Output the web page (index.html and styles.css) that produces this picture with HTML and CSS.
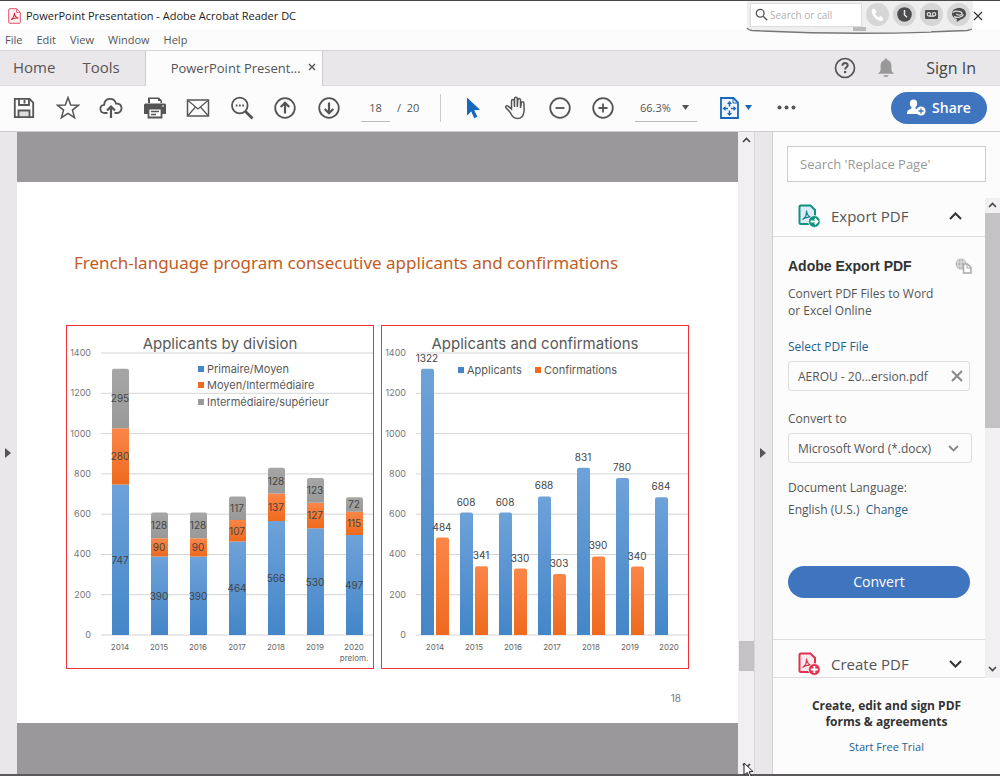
FILE: index.html
```html
<!DOCTYPE html>
<html lang="en">
<head>
<meta charset="utf-8">
<title>PowerPoint Presentation - Adobe Acrobat Reader DC</title>
<link rel="stylesheet" href="styles.css">
</head>
<body>
<div class="app">
  <header class="titlebar">
    <svg class="title-icon" width="13" height="16" viewBox="0 0 13 16" fill="none" stroke="#e2566c"><path fill="#fdf1f2" d="M.7 2Q.7.7 2 .7h6.500L12.300 4.500V14q0 1.300-1.300 1.300H2Q.7 15.300.7 14z"/><path d="M8.500.7v3.800h3.800" stroke-width=".8"/><path stroke="#d5283f" stroke-width="1.100" d="M3 11.800c2-1.500 3.300-4 3.400-6.800 0 2.800 1.600 4.700 4 5.200C7.500 9.500 5.300 10 3 11.800z"/></svg>
    <span>PowerPoint Presentation - Adobe Acrobat Reader DC</span>
    <button class="close" aria-label="Close"><svg width="10" height="10" viewBox="0 0 10 10" stroke="#333" stroke-width="1.200"><path d="M1 1l8 8M9 1L1 9"/></svg></button>
  </header>

  <div class="callbar">
    <label class="callsearch">
      <svg width="13" height="13" viewBox="0 0 13 13" fill="none" stroke="#555" stroke-width="1.300"><circle cx="5.200" cy="5.200" r="3.900"/><path d="M8.200 8.200l4 4"/></svg>
      <input type="text" placeholder="Search or call" aria-label="Search or call">
    </label>
    <button class="round" aria-label="Call"><svg width="23" height="23" viewBox="0 0 23 23"><path fill="#fff" d="M6.200 6.300l2.300-.8 2 3.600-1.500 1.500c.8 1.800 2 3 3.700 3.800l1.600-1.400 3.200 2.200-1 2.200c-1 .8-2.600.6-4.200-.2C9 15.500 6.700 12.700 5.900 9.500c-.3-1.300-.2-2.500.3-3.200z"/></svg></button>
    <button class="round" aria-label="Recent calls"><svg width="23" height="23" viewBox="0 0 23 23"><circle cx="11.500" cy="11.500" r="7.300" fill="#4d4d4f"/><path d="M11.500 7v5l2.600 2.200" fill="none" stroke="#e8e8e8" stroke-width="1.500"/></svg></button>
    <button class="round" aria-label="Voicemail"><svg width="23" height="23" viewBox="0 0 23 23"><rect x="5" y="7" width="13" height="9" rx="1" fill="#4d4d4f"/><g fill="none" stroke="#ddd" stroke-width="1.200"><circle cx="8.900" cy="11.300" r="1.700"/><circle cx="14.100" cy="11.300" r="1.700"/><path d="M8.900 13.200h5.200"/></g></svg></button>
    <button class="round" aria-label="Messages"><svg width="23" height="23" viewBox="0 0 23 23"><path fill="#4d4d4f" d="M5 10.500C5 7.300 8 5 12 5c4.200 0 7 2.400 7 5.800 0 3.200-2.600 5.200-5.300 5.700L9.800 19v-3.300C6.800 15.400 5 13.300 5 10.500z"/><path fill="none" stroke="#dcdcdc" stroke-width="1.300" d="M5.500 9.500c3-2 9.500-1.600 9.500 1 0 2.300-5.500 2-5.300.2M7 13.600c3.500 1.800 8.500.5 9.500-2"/></svg></button>
    <svg class="call-edge" width="225" height="7" viewBox="0 0 225 7"><path fill="#efefef" d="M0 0h225v1q-2 1-5 1.500Q112 8 5 2.500 1 2 0 0z"/><path fill="none" stroke="#777" stroke-width="1.300" d="M0 0q1 2 5 2.500Q112 8 220 2.500q3-.5 5-1.500"/><rect x="106" y="-1" width="13" height="4" fill="#bbb"/></svg>
  </div>

  <nav class="menubar">
    <button>File</button><button>Edit</button><button>View</button><button>Window</button><button>Help</button>
  </nav>

  <div class="tabs">
    <button class="home">Home</button>
    <button class="tools">Tools</button>
    <div class="doc-tab"><span>PowerPoint Present...</span>
      <button aria-label="Close tab"><svg width="8" height="8" viewBox="0 0 8 8" stroke="#555" stroke-width="1.400"><path d="M1 1l6 6M7 1L1 7"/></svg></button></div>
    <div class="account">
      <button aria-label="Help"><svg width="22" height="22" viewBox="0 0 22 22" fill="none" stroke="#555" stroke-width="1.700"><circle cx="11" cy="11" r="9.500"/><path stroke-width="2" d="M8.500 8.700c0-3.500 5.200-3.300 5.200-.4 0 2-2.600 2-2.600 4.200"/><path stroke-width="2.200" d="M11.100 14v2.200"/></svg></button>
      <button aria-label="Notifications"><svg width="18" height="20" viewBox="0 0 18 20" fill="#999"><path d="M9 .5c1 0 1.400.7 1.400 1.600 2.500.7 4 2.800 4 5.400v4.300c0 1.500 1.100 2.700 2.800 4H.8c1.700-1.300 2.800-2.500 2.800-4V7.500c0-2.600 1.500-4.700 4-5.400C7.600 1.200 8 .5 9 .5z"/><path d="M6.500 17.200h5c-.5 2.500-4.500 2.500-5 0z"/></svg></button>
      <button class="signin">Sign In</button>
    </div>
  </div>

  <div class="toolbar">
    <div class="tools-left">
      <button aria-label="Save"><svg viewBox="0 0 24 24"><path fill="#ddd" d="M7 15.500h10V21H7z" stroke="none"/><path d="M2.800 2.800h14.700l3.700 3.700v14.700H2.800z"/><path d="M7 3v6h10V3M12.500 4v3.500M6.500 21v-6.500h11V21"/></svg></button>
      <button aria-label="Star"><svg viewBox="0 0 24 24"><path stroke-width="1.500" d="M12 1.500l2.700 7.400 7.900.3-6.200 4.900 2.200 7.600-6.600-4.400-6.600 4.400 2.200-7.600-6.200-4.900 7.900-.3z"/></svg></button>
      <button aria-label="Upload"><svg viewBox="0 0 24 24"><path d="M8.500 17H6c-6 0-6-8-.8-8.200C5.500 1.500 15 1 17 7.500c7.500-.5 7 9.500 1 9.500h-2.500"/><path stroke-width="2.200" d="M12 22V11M8 14.500l4-4 4 4"/></svg></button>
      <button aria-label="Print"><svg viewBox="0 0 24 24"><path fill="#555" d="M1 9q0-1.500 1.500-1.500h19Q23 7.500 23 9v9h-4v-4.500H5V18H1z" stroke="none"/><path fill="#555" d="M5 1.500h11l3 3V7H5z" stroke="none"/><path fill="#fff" stroke="none" d="M7 3h8v2h2.500v2H7z"/><path fill="#fff" d="M5.500 12.500h13v9h-13z"/><path d="M8 15.500h8M8 18.500h5" stroke-width="1.300"/><path stroke="#fff" stroke-width="1" d="M19 10h2"/></svg></button>
      <button aria-label="Email"><svg viewBox="0 0 24 24"><path stroke-width="1.500" d="M1.500 4h21v16h-21z"/><path stroke-width="1.200" d="M2 4.500l10 8.500 10-8.500M2 19.500l7.500-8.500M22 19.500L14.500 11"/></svg></button>
      <button aria-label="Search"><svg viewBox="0 0 24 24"><circle cx="9.800" cy="9.500" r="7.800"/><path stroke-width="2.800" d="M15.500 15.500l7 7"/><path stroke-width="1.800" d="M5.800 9.500h1.700M9 9.500h1.700M12.200 9.500h1.700"/></svg></button>
      <button aria-label="Previous page"><svg viewBox="0 0 24 24"><circle cx="12" cy="12" r="9.800"/><path stroke-width="2.200" d="M12 17.500V7.500M7.700 11L12 6.700l4.300 4.300"/></svg></button>
      <button aria-label="Next page"><svg viewBox="0 0 24 24"><circle cx="12" cy="12" r="9.800"/><path stroke-width="2.200" d="M12 6.500v10M7.700 13l4.300 4.300 4.300-4.300"/></svg></button>
    </div>
    <div class="pager"><input type="text" value="18" aria-label="Page number"><span>/&nbsp; 20</span></div>
    <div class="tools-mid">
      <button aria-label="Select"><svg viewBox="0 0 24 24"><path fill="#1767ba" stroke="none" d="M6 1.500l13 12.200-5.800.5 3.200 6.600-3.200 1.500-2.900-6.700L6 19.500z"/></svg></button>
      <button aria-label="Pan"><svg viewBox="0 0 24 24"><path stroke-width="1.500" d="M6.300 16.500L2 11.800c-1-1.500.6-2.800 2.200-1.700l3.300 3V5c0-2 2.600-2 2.700 0l.3 6V2.800c0-2 2.800-2 2.800 0V11l.5-7.200c.2-1.900 2.700-1.800 2.700.2V12l.8-5c.4-1.800 2.700-1.500 2.600.4C19.800 10 20.500 13 20 15c-.3 4.500-2.500 7.500-6.500 7.500-4 0-5.700-2.500-7.200-6z"/></svg></button>
      <button aria-label="Zoom out"><svg viewBox="0 0 24 24"><circle cx="12" cy="12" r="9.800"/><path d="M7.500 12h9"/></svg></button>
      <button aria-label="Zoom in"><svg viewBox="0 0 24 24"><circle cx="12" cy="12" r="9.800"/><path d="M7.500 12h9M12 7.500v9"/></svg></button>
    </div>
    <label class="zoom"><select aria-label="Zoom level"><option>66.3%</option></select><svg width="7" height="5" viewBox="0 0 7 5"><path fill="#555" d="M0 0h7L3.500 5z"/></svg></label>
    <button class="fit" aria-label="Page display">
      <svg width="19" height="22" viewBox="0 0 19 22"><path fill="#eef5fd" stroke="#1767ba" stroke-width="1.800" d="M1 1h12.500L18 5.500V21H1z"/><path fill="none" stroke="#1767ba" d="M13 1v5h5"/><g fill="#1767ba"><path d="M9.500 4l2.500 3H7zM9.500 19L7 16h5zM2.500 11.500l3-2.500v5zM16.500 11.500l-3-2.500v5z"/></g><path stroke="#1767ba" stroke-width="1.500" d="M9.500 6v3.500M9.500 13.500V17M5 11.500h3M11 11.500h3"/></svg>
      <svg width="7" height="5" viewBox="0 0 7 5"><path fill="#1767ba" d="M0 0h7L3.500 5z"/></svg>
    </button>
    <button class="more" aria-label="More tools"><svg width="19" height="5" viewBox="0 0 19 5" fill="#555"><circle cx="2.500" cy="2.500" r="2"/><circle cx="9.500" cy="2.500" r="2"/><circle cx="16.500" cy="2.500" r="2"/></svg></button>
    <button class="share"><svg width="19" height="17" viewBox="0 0 19 17"><path fill="#fff" d="M6.500.5c2.400 0 3.700 1.600 3.700 3.900 0 1.700-.7 2.900-1.700 3.700v1.300c1 .4 1.800.7 2.500 1.100-.9 1.200-1 2.900-.3 4.500H0c0-3.500 1.200-4.400 4.500-5.600V8.100c-1-.8-1.700-2-1.700-3.700C2.800 2.100 4.100.5 6.500.5z"/><circle cx="14" cy="12" r="4.600" fill="#fff"/><path stroke="#3f75bf" stroke-width="1.300" d="M14 9.500v5M11.500 12h5"/></svg>Share</button>
  </div>

  <main class="main">
    <button class="rail rail-left" aria-label="Open navigation pane"><svg width="6" height="10" viewBox="0 0 6 10"><path fill="#555" d="M0 0l6 5-6 5z"/></svg></button>
    <section class="viewer">
      <article class="slide">
        <h1>French-language program consecutive applicants and confirmations</h1>
        <div class="charts">
          <svg class="chart" id="division" viewBox="0 0 306 342" role="img" aria-label="Applicants by division"></svg>
          <svg class="chart" id="confirmations" viewBox="0 0 306 342" role="img" aria-label="Applicants and confirmations"></svg>
        </div>
        <div class="page-no">18</div>
      </article>
    </section>
    <div class="scroll doc-scroll">
      <svg width="9" height="6" viewBox="0 0 9 6"><path d="M1 5l3.500-3.500L8 5"/></svg>
      <div class="thumb"></div>
      <svg class="down" width="9" height="6" viewBox="0 0 9 6"><path d="M1 1l3.500 3.500L8 1"/></svg>
      <svg class="pointer" width="11" height="16" viewBox="0 0 11 16"><path fill="#fff" stroke="#222" d="M1 1l9 8.500-4 .3 2.200 4.400-1.900.8-2-4.500L1 13z"/></svg>
    </div>
    <button class="rail rail-right" aria-label="Collapse tools pane"><svg width="6" height="10" viewBox="0 0 6 10"><path fill="#555" d="M0 0l6 5-6 5z"/></svg></button>
    <aside class="panel">
      <input class="panel-search" type="text" placeholder="Search 'Replace Page'" aria-label="Search tools">
      <div class="panel-mid">
        <div class="panel-list">
          <button class="tool-head">
            <svg width="23" height="24" viewBox="0 0 23 24"><path fill="#dcebfa" stroke="#0f927f" stroke-width="2" d="M1.500 3q0-1.500 1.500-1.500h9.500L17 6v14H3q-1.500 0-1.500-1.500z"/><path fill="none" stroke="#0f7f86" stroke-width="1.100" d="M4.500 15.500c3-1.800 4.300-5 4-9 .3 4.500 2.500 6.500 5.500 7-3.500-.8-6.500-.3-9.500 2z"/><circle cx="16.300" cy="17.500" r="5.900" fill="#0f927f" stroke="#fff" stroke-width=".8"/><path fill="none" stroke="#fff" stroke-width="1.900" d="M12.500 17.500h6.500M16.800 14.700l2.700 2.800-2.700 2.800"/></svg>
            <span>Export PDF</span>
            <svg class="chev" width="13" height="8" viewBox="0 0 13 8"><path d="M1 7l5.500-5.500L12 7"/></svg>
          </button>
          <div class="tool-body">
            <div class="body-head"><h2>Adobe Export PDF</h2>
              <svg width="17" height="16" viewBox="0 0 17 16"><circle cx="6" cy="6" r="5.500" fill="#b5b5b5"/><path fill="none" stroke="#eee" d="M1 4h10M1 8h10M6 1v10M3.500 1.500q-2 4.500 0 9M8.500 1.500q2 4.500 0 9" stroke-width=".7"/><path fill="#fff" stroke="#aaa" stroke-width="1.500" d="M8.500 6h4l3.500 3.500V15H8.500z"/><path fill="none" stroke="#aaa" d="M12 6v4h4"/></svg></div>
            <p class="intro">Convert PDF Files to Word<br>or Excel Online</p>
            <a class="select-file" href="#">Select PDF File</a>
            <div class="file"><span>AEROU - 20...ersion.pdf</span><button aria-label="Remove file"><svg width="12" height="12" viewBox="0 0 12 12" stroke="#888" stroke-width="2"><path d="M1 1l10 10M11 1L1 11"/></svg></button></div>
            <label class="convert-label" for="format">Convert to</label>
            <div class="format"><select id="format"><option>Microsoft Word (*.docx)</option></select><svg width="11" height="7" viewBox="0 0 11 7"><path fill="none" stroke="#888" stroke-width="1.800" d="M1 1l4.500 4.500L10 1"/></svg></div>
            <p class="lang">Document Language:<br>English (U.S.)&nbsp; <a href="#">Change</a></p>
            <button class="convert">Convert</button>
          </div>
          <button class="tool-head create">
            <svg width="23" height="24" viewBox="0 0 23 24"><path fill="#fbeaec" stroke="#e0304f" stroke-width="2" d="M1.500 3q0-1.500 1.500-1.500h9.500L17 6v14H3q-1.500 0-1.500-1.500z"/><path fill="none" stroke="#d5304b" stroke-width="1.100" d="M4.500 15.500c3-1.800 4.300-5 4-9 .3 4.500 2.500 6.500 5.500 7-3.500-.8-6.500-.3-9.500 2z"/><circle cx="16.300" cy="17.500" r="5.900" fill="#e0304f" stroke="#fff" stroke-width=".8"/><path fill="none" stroke="#fff" stroke-width="2" d="M12.800 17.500h7M16.300 14v7"/></svg>
            <span>Create PDF</span>
            <svg class="chev" width="13" height="8" viewBox="0 0 13 8"><path d="M1 1l5.500 5.500L12 1"/></svg>
          </button>
        </div>
        <div class="scroll panel-scroll">
          <svg width="9" height="6" viewBox="0 0 9 6"><path d="M1 5l3.500-3.500L8 5"/></svg>
          <div class="thumb"></div>
          <svg class="down" width="9" height="6" viewBox="0 0 9 6"><path d="M1 1l3.500 3.500L8 1"/></svg>
        </div>
      </div>
      <footer class="promo">
        <strong>Create, edit and sign PDF<br>forms &amp; agreements</strong>
        <a href="#">Start Free Trial</a>
      </footer>
    </aside>
  </main>
</div>
<script src="charts.js"></script>
</body>
</html>
```
FILE: styles.css
```css
* { box-sizing: border-box; }
body {
  margin: 0;
  font-family: "Open Sans", "Noto Sans", sans-serif;
  font-size: 12px;
  color: #555;
  background: #fcfcfd;
}
button, input, select { font: inherit; color: inherit; }
button { padding: 0; border: 0; background: none; }
h1, h2, p { margin: 0; font-weight: 400; }
svg { display: block; flex: none; }
a { color: #26628f; text-decoration: none; }

.app {
  position: relative;
  display: flex;
  flex-direction: column;
  min-height: 100vh;
  border-top: 1px solid #4a484b;
  border-bottom: 2px solid #5a585b;
}

.titlebar {
  display: flex;
  align-items: center;
  gap: 5px;
  height: 29px;
  padding: 0 17px 0 8px;
  background: #fff;
  color: #222;
  font-size: 11px;
}
.close { margin-left: auto; }

.callbar {
  position: absolute;
  top: 0;
  right: 27px;
  display: flex;
  align-items: center;
  gap: 4px;
  width: 226px;
  height: 27px;
  padding: 0 3px;
  background: #efefef;
}
.callsearch {
  display: flex;
  align-items: center;
  gap: 2px;
  flex: 1;
  min-width: 0;
  height: 24px;
  padding-left: 4px;
  background: #fff;
  border: 1px solid #ddd;
}
.callsearch input { width: 100%; min-width: 0; padding: 0; border: 0; background: none; font-size: 10px; }
.callsearch input::placeholder { color: #b0b0b0; }
.round { width: 23px; height: 23px; border-radius: 50%; background: #d6d6d6; }
.call-edge { position: absolute; left: 0; top: 27px; overflow: visible; }

.menubar {
  display: flex;
  gap: 14px;
  height: 20px;
  padding: 0 5px 1px;
  font-size: 11px;
}

.tabs {
  display: flex;
  height: 36px;
  background: #e9e7ea;
  border-top: 1px solid #d5d5d5;
  border-bottom: 1px solid #dcdadd;
  font-size: 15px;
}
.tabs button { padding-bottom: 1px; }
.tabs .home { padding: 0 27px 2px 13px; }
.tabs .tools { padding: 0 25px 2px 0; }
.doc-tab {
  display: flex;
  align-items: center;
  gap: 7px;
  margin-bottom: -1px;
  padding: 0 6px 2px 25px;
  background: #fcfcfd;
  border-left: 1px solid #ccc;
  border-right: 1px solid #ccc;
  font-size: 13px;
}
.account { display: flex; align-items: center; gap: 21px; margin-left: auto; padding-right: 24px; }
.signin { padding-left: 10px; color: #444; font-size: 16px; }

.toolbar {
  display: flex;
  align-items: center;
  height: 46px;
  padding: 0 13px 2px 12px;
  border-bottom: 1px solid #ccc;
}
.tools-left, .tools-mid { display: flex; justify-content: space-between; }
.tools-left { width: 329px; }
.tools-left svg, .tools-mid svg {
  width: 24px;
  height: 24px;
  fill: none;
  stroke: #555;
  stroke-width: 1.800;
}
.pager { display: flex; align-items: center; gap: 7px; width: 79px; margin-left: 20px; font-size: 11px; }
.pager input {
  width: 29px;
  height: 28px;
  padding: 0;
  border: 0;
  border-bottom: 1px solid #bbb;
  background: none;
  text-align: center;
}
.tools-mid { width: 175px; padding-left: 20px; height: 28px; align-items: center; border-left: 1px solid #ccc; }
.zoom {
  display: flex;
  align-items: center;
  width: 62px;
  height: 28px;
  margin-left: 20px;
  padding: 0 8px 0 5px;
  border-bottom: 1px solid #bbb;
  font-size: 11px;
}
.zoom select { width: 100%; padding: 0; border: 0; background: none; appearance: none; }
.fit { display: flex; align-items: center; gap: 6px; margin-left: 23px; }
.more { margin-left: 25px; }
.share {
  display: flex;
  align-items: center;
  justify-content: center;
  gap: 6px;
  width: 96px;
  height: 32px;
  margin-left: auto;
  border-radius: 16px;
  background: #3f75bf;
  color: #fff;
  font-size: 14px;
  font-weight: 600;
}

.main { display: flex; flex: 1; }
.rail { display: flex; align-items: center; justify-content: center; padding-right: 2px; background: #e9e7ea; }
.rail-left { width: 17px; }
.rail-right { width: 19px; border-left: 1px solid #d8d6d9; border-right: 1px solid #d0d0d0; }
.viewer { display: flex; flex: 1; min-width: 0; padding: 50px 0 51px; background: #9a989a; }
.slide { flex: 1; min-width: 0; padding: 67px 49px 16px; background: #fff; }
.slide h1 {
  color: #c25c24;
  font-family: "Noto Sans", sans-serif;
  font-size: 17px;
  line-height: 28px;
  padding-left: 8px;
  white-space: nowrap;
}
.charts { display: flex; gap: 7px; margin-top: 48px; }
.chart {
  flex: 1;
  min-width: 0;
  border: 1px solid #f0323c;
  font-family: Inter, Roboto, sans-serif;
  fill: #595959;
}
.chart .grid { stroke: #d4d4d4; }
.chart .axis { font-size: 9px; fill: #777; text-anchor: end; }
.chart .year { font-size: 8px; fill: #666; text-anchor: middle; }
.chart .value { font-size: 10px; fill: #444; text-anchor: middle; }
.chart .title { font-size: 15px; text-anchor: middle; }
.chart .legend { font-size: 11px; }
.page-no { margin-top: 23px; padding-right: 8px; color: #777; font-family: Inter, Roboto, sans-serif; font-size: 10px; line-height: 13px; text-align: right; }

.scroll { position: relative; display: flex; flex-direction: column; align-items: center; background: #f1eff2; }
.scroll > svg { fill: none; stroke: #444; stroke-width: 1.600; }
.scroll .thumb { background: #c4c2c4; }
.scroll .down { margin-top: auto; }
.doc-scroll { width: 16px; padding: 5px 0 5px; }
.doc-scroll .thumb { width: 15px; height: 30px; margin-top: 498px; }
.scroll .pointer { position: absolute; left: 5px; bottom: -4px; stroke-width: 1; }

.panel { display: flex; flex-direction: column; width: 227px; }
.panel-search {
  height: 36px;
  margin: 14px 14px 16px;
  padding: 0 12px;
  border: 1px solid #ccc;
  background: #fff;
  font-size: 13px;
}
.panel-search::placeholder { color: #999; }
.panel-mid { display: flex; height: 480px; }
.panel-list { display: flex; flex-direction: column; flex: 1; min-width: 0; }
.panel-scroll { width: 15px; padding: 4px 0 6px; }
.panel-scroll .thumb { width: 15px; height: 215px; margin-top: 5px; }
.tool-head {
  display: flex;
  align-items: center;
  gap: 10px;
  height: 39px;
  padding: 0 23px 2px 25px;
  border-bottom: 1px solid #ddd;
  font-size: 15px;
}
.chev { margin-left: auto; fill: none; stroke: #333; stroke-width: 2; }
.create { margin-top: auto; padding-top: 10px; padding-bottom: 0; border-top: 1px solid #ddd; }
.tool-body { display: flex; flex-direction: column; padding: 19px 13px 0 15px; line-height: 17px; }
.body-head { display: flex; justify-content: space-between; align-items: center; height: 20px; }
.body-head h2 { color: #333; font-family: "Liberation Sans", sans-serif; font-size: 14px; font-weight: 700; }
.intro { margin-top: 9px; }
.select-file { margin-top: 19px; }
.file, .format {
  display: flex;
  align-items: center;
  justify-content: space-between;
  height: 30px;
  margin-top: 6px;
  padding: 0 6px 0 9px;
  border: 1px solid #ddd;
  border-radius: 3px;
}
.file { margin-right: 2px; }
.convert-label { margin-top: 19px; }
.format { padding-right: 12px; }
.format select { flex: 1; min-width: 0; padding: 0; border: 0; background: none; appearance: none; }
.lang { margin-top: 14px; line-height: 22px; }
.convert {
  height: 32px;
  margin: 45px 2px 0 0;
  padding-bottom: 2px;
  border-radius: 16px;
  background: #3f75bf;
  color: #fff;
  font-size: 14px;
}
.promo { display: flex; flex-direction: column; align-items: center; padding-top: 20px; line-height: 16px; text-align: center; }
.promo strong { color: #333; font-weight: 700; }
.promo a { margin-top: 9px; font-size: 11px; }
```
FILE: charts.js
```js
const NS = "http://www.w3.org/2000/svg";
const YEARS = ["2014", "2015", "2016", "2017", "2018", "2019", "2020"];
const BASE = 309, UNIT = 0.2014, STEP = 39;
const COLORS = {
  blue: ["#6ea2d9", "#4486c8"],
  orange: ["#fb8648", "#ee6a1f"],
  gray: ["#a6a6a6", "#999999"]
};

function add(parent, tag, attrs, text) {
  const el = document.createElementNS(NS, tag);
  for (const key in attrs) el.setAttribute(key, attrs[key]);
  if (text !== undefined) el.textContent = text;
  parent.appendChild(el);
  return el;
}

function frame(svg, title, titleX) {
  const defs = add(svg, "defs", {});
  for (const name in COLORS) {
    const g = add(defs, "linearGradient", { id: svg.id + name, x1: 0, y1: 0, x2: 0, y2: 1 });
    add(g, "stop", { offset: 0, "stop-color": COLORS[name][0] });
    add(g, "stop", { offset: 1, "stop-color": COLORS[name][1] });
  }
  for (let v = 0; v <= 1400; v += 200) {
    const y = BASE - v * UNIT;
    add(svg, "line", { class: "grid", x1: 34, x2: 306, y1: y, y2: y });
    add(svg, "text", { class: "axis", x: 24, y: y + 3 }, v);
  }
  add(svg, "text", { class: "title", x: titleX, y: 23 }, title);
}

function bar(svg, color, x, width, from, to, rounded) {
  const top = BASE - to * UNIT, bottom = BASE - from * UNIT, r = rounded ? 2 : 0;
  add(svg, "path", {
    fill: `url(#${svg.id}${color})`,
    d: `M${x} ${bottom}V${top + r}q0 ${-r} ${r} ${-r}H${x + width - r}q${r} 0 ${r} ${r}V${bottom}z`
  });
}

function legend(svg, color, x, y, label) {
  add(svg, "rect", { x: x, y: y - 7, width: 6, height: 6, fill: COLORS[color][1] });
  add(svg, "text", { class: "legend", x: x + 9, y: y }, label);
}

const division = document.getElementById("division");
frame(division, "Applicants by division", 153);
legend(division, "blue", 131, 47, "Primaire/Moyen");
legend(division, "orange", 131, 63, "Moyen/Intermédiaire");
legend(division, "gray", 131, 80, "Intermédiaire/supérieur");
[[747, 280, 295], [390, 90, 128], [390, 90, 128], [464, 107, 117],
 [566, 137, 128], [530, 127, 123], [497, 115, 72]].forEach((parts, i) => {
  const center = 53 + i * STEP;
  let from = 0;
  parts.forEach((n, k) => {
    bar(division, ["blue", "orange", "gray"][k], center - 8, 17, from, from + n, k === 2);
    add(division, "text", { class: "value", x: center, y: BASE - (from + n / 2) * UNIT + 4 }, n);
    from += n;
  });
  add(division, "text", { class: "year", x: center, y: 324 }, YEARS[i]);
});
add(division, "text", { class: "year", x: 287, y: 335 }, "prelom.");

const confirmations = document.getElementById("confirmations");
frame(confirmations, "Applicants and confirmations", 153);
legend(confirmations, "blue", 76, 48, "Applicants");
legend(confirmations, "orange", 153, 48, "Confirmations");
const pairs = [[1322, 484], [608, 341], [608, 330], [688, 303], [831, 390], [780, 340], [684, 0]];
pairs.forEach(([a, c], i) => {
  const x = 39 + i * STEP;
  bar(confirmations, "blue", x, 13, 0, a, true);
  if (c) bar(confirmations, "orange", x + 15, 13, 0, c, true);
  add(confirmations, "text", { class: "year", x: x + 14, y: 324 }, YEARS[i]);
});
pairs.forEach(([a, c], i) => {
  const x = 45 + i * STEP;
  add(confirmations, "text", { class: "value", x: x, y: BASE - a * UNIT - 7 }, a);
  if (c) add(confirmations, "text", { class: "value", x: x + 15, y: BASE - c * UNIT - 7 }, c);
});
```
